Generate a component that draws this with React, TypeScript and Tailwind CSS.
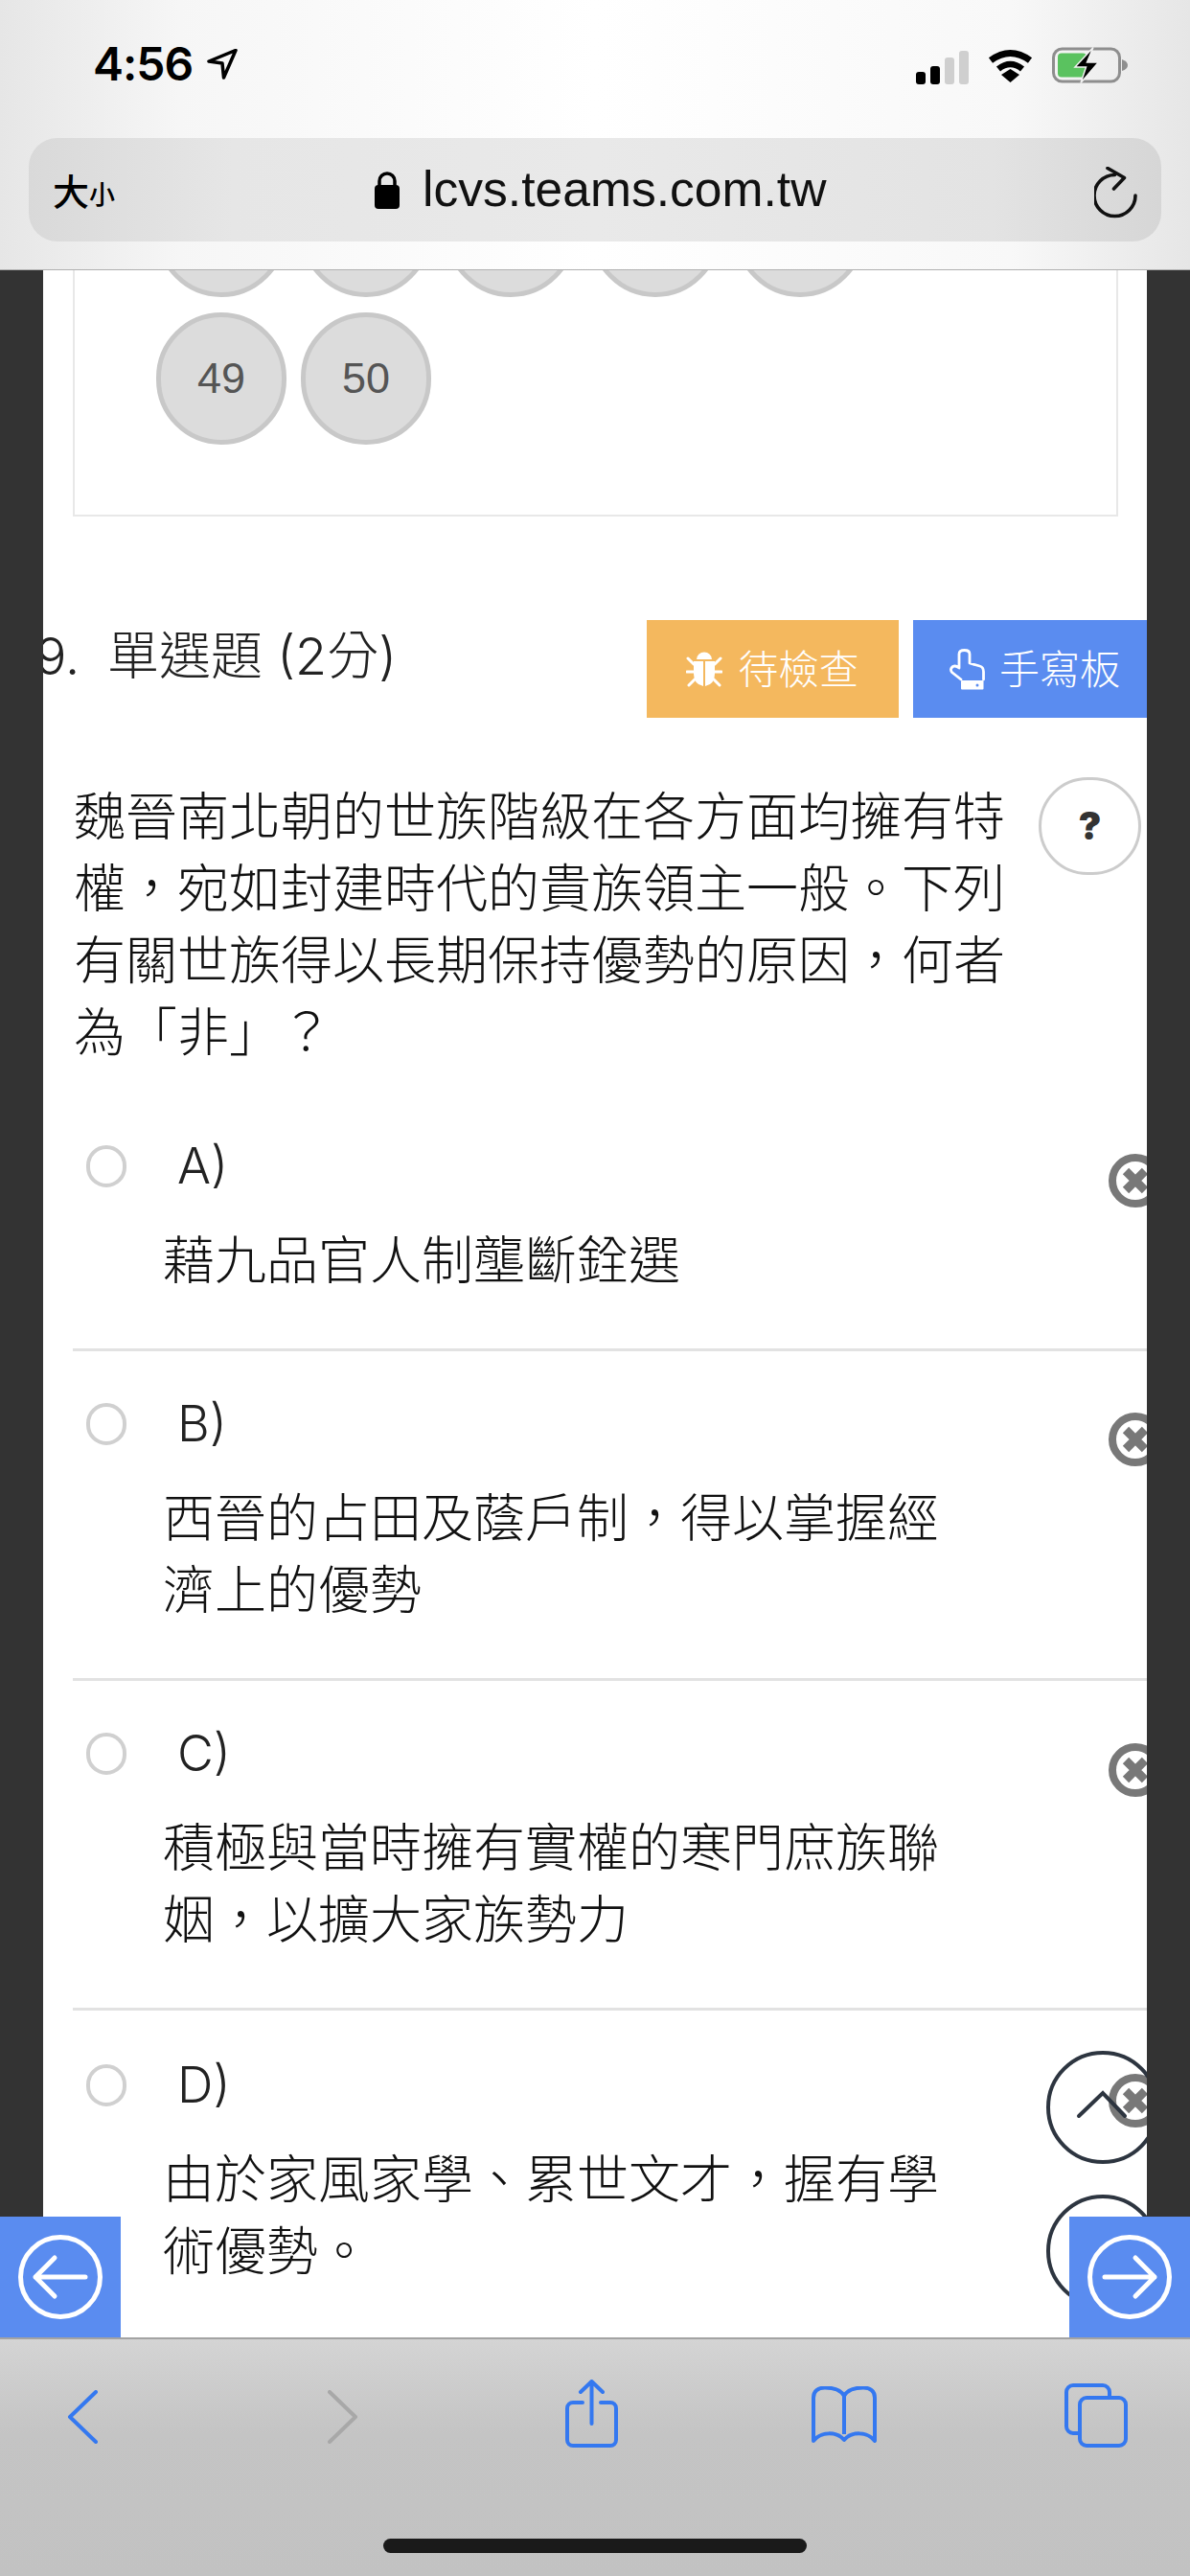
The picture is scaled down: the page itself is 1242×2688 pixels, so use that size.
const options = [
  { label: 'A)', text: '藉九品官人制壟斷銓選', closeTop: 'top-[22px]', padTop: '' },
  { label: 'B)', text: '西晉的占田及蔭戶制\uFF0C得以掌握經濟上的優勢', closeTop: 'top-[64px]', padTop: 'pt-[41px]' },
  { label: 'C)', text: '積極與當時擁有實權的寒門庶族聯姻\uFF0C以擴大家族勢力', closeTop: 'top-[65px]', padTop: 'pt-[41px]' },
  { label: 'D)', text: '由於家風家學、累世文才\uFF0C握有學術優勢。', closeTop: 'top-[66px]', padTop: 'pt-[43px]' },
];

const StatusBar = () => (
  <div className="flex h-[144px] items-start justify-between pl-[97px] pr-[64px] pt-[41px]">
    <div className="flex items-center gap-[15px]">
      <span className="font-['Inter',sans-serif] text-[48px] font-semibold leading-[52px] tracking-[-1px] text-black">4:56</span>
      <svg width="32" height="32" viewBox="0 0 32 32" fill="none" stroke="#000" strokeWidth="3.5" strokeLinejoin="round">
        <path d="M30 1.5 L2 13 L16 15 L17.5 30 Z" />
      </svg>
    </div>
    <div className="flex items-center pt-[8px]">
      <div className="flex h-[37px] items-end gap-[5px]">
        <div className="h-[13px] w-[10px] rounded-[3px] bg-black" />
        <div className="h-[19px] w-[10px] rounded-[3px] bg-black" />
        <div className="h-[28px] w-[10px] rounded-[3px] bg-[#cfcfcf]" />
        <div className="h-[35px] w-[10px] rounded-[3px] bg-[#cfcfcf]" />
      </div>
      <svg className="ml-[20px]" width="47" height="36" viewBox="0 0 47 36" fill="none" stroke="#000" strokeLinecap="butt">
        <path d="M3 12 Q23.5 -3 44 12" strokeWidth="7" />
        <path d="M11 21 Q23.5 11 36 21" strokeWidth="6.5" />
        <path d="M14 27 L23.5 21 L33 27 L23.5 35 Z" fill="#000" stroke="none" />
      </svg>
      <svg className="ml-[20px]" width="80" height="40" viewBox="0 0 80 40" fill="none">
        <rect x="1.5" y="2" width="69" height="34" rx="9" stroke="#8e8e8e" strokeWidth="3" />
        <rect x="6" y="6.5" width="30" height="25" rx="4" fill="#5ac25f" />
        <path d="M73 13 Q79 15 79 19 Q79 23 73 25 Z" fill="#8e8e8e" />
        <path d="M43 0.5 L24 21 H35.5 L30 37.5 L48.5 16 H36.5 Z" fill="#000" stroke="#f2f2f2" strokeWidth="1.5" />
      </svg>
    </div>
  </div>
);

const AddressBar = () => (
  <div className="mx-[30px] flex h-[108px] items-center rounded-[30px] bg-[linear-gradient(90deg,#d9d9d9_0%,#e6e6e6_18%,#e9e9e9_50%,#e3e3e3_85%,#d6d6d6_100%)] pl-[25px] pr-[24px]">
    <div className="flex w-[335px] items-end font-['Noto_Sans_CJK_TC',sans-serif] font-medium leading-none text-black">
      <span className="text-[38px]">大</span>
      <span className="pb-[2px] text-[27px]">小</span>
    </div>
    <svg width="28" height="40" viewBox="0 0 28 40" fill="#000">
      <path d="M6 17 V11 a8 8 0 0 1 16 0 V17" fill="none" stroke="#000" strokeWidth="3.5" />
      <rect x="1" y="15" width="26" height="25" rx="4" />
    </svg>
    <span className="ml-[23px] font-['Liberation_Sans',sans-serif] text-[51.6px] leading-none text-[#111]">lcvs.teams.com.tw</span>
    <svg className="ml-auto mt-[6px]" width="46" height="54" viewBox="0 0 46 54" fill="none" stroke="#111" strokeWidth="3.6" strokeLinecap="round" strokeLinejoin="round">
      <path d="M43 30 A21.5 21.5 0 1 1 21.5 8.5" />
      <path d="M14 1.5 L31.5 11.5 L20.5 23" />
    </svg>
  </div>
);

const BugIcon = () => (
  <svg width="38" height="38" viewBox="0 0 38 38" fill="#fff" stroke="#fff" strokeLinecap="round">
    <path d="M11 9 a8 7.5 0 0 1 16 0 Z" stroke="none" />
    <path d="M8 11 H18 V37 Q8 35 8 24 Z" stroke="none" />
    <path d="M30 11 H20 V37 Q30 35 30 24 Z" stroke="none" />
    <path d="M8 14 L2 8 M8 22 H1 M9 30 L3 36 M30 14 L36 8 M30 22 H37 M29 30 L35 36" strokeWidth="3" />
  </svg>
);

const HandIcon = () => (
  <svg width="37" height="43" viewBox="0 0 37 43" fill="none" stroke="#fff" strokeWidth="2.8" strokeLinecap="round" strokeLinejoin="round">
    <path d="M12 32 L2.5 24.5 Q0 21 3.5 18.5 Q6.5 17 10 20 V5.5 Q10 1.5 15.5 1.5 Q21 1.5 21 5.5 V15 L31.5 18 Q35.5 19 35.5 24 V32" />
    <rect x="12" y="33" width="23.5" height="9.5" rx="1" fill="#fff" stroke="none" />
    <circle cx="29" cy="38" r="1.5" fill="#5a8cf0" stroke="none" />
  </svg>
);

const CloseCircle = () => (
  <svg width="56" height="56" viewBox="0 0 56 56" fill="none">
    <circle cx="28" cy="28" r="24" stroke="#787878" strokeWidth="8" />
    <path d="M18 18 L38 38 M38 18 L18 38" stroke="#787878" strokeWidth="9" />
  </svg>
);

const ArrowCircle = ({ dir }: { dir: 'left' | 'right' }) => (
  <svg width="88" height="88" viewBox="0 0 88 88" fill="none" stroke="#fff" strokeWidth="5" strokeLinecap="round" strokeLinejoin="round">
    <circle cx="44" cy="44" r="41.5" />
    {dir === 'left' ? <path d="M70 44 H18 M38 24 L18 44 L38 64" /> : <path d="M18 44 H70 M50 24 L70 44 L50 64" />}
  </svg>
);

const Toolbar = () => (
  <div className="relative h-[249px] border-t-2 border-[#a3a3a3] bg-[linear-gradient(180deg,#d4d4d4_0%,#c4c4c4_40%,#c2c2c2_100%)]">
    <div className="flex items-start pl-[70px] pt-[42px]">
      <svg className="mt-[11px]" width="32" height="56" viewBox="0 0 32 56" fill="none" stroke="#3478f0" strokeWidth="4" strokeLinecap="round" strokeLinejoin="round">
        <path d="M30 2 L3 28 L30 54" />
      </svg>
      <svg className="ml-[240px] mt-[11px]" width="32" height="56" viewBox="0 0 32 56" fill="none" stroke="#a8a8a8" strokeWidth="4" strokeLinecap="round" strokeLinejoin="round">
        <path d="M2 2 L29 28 L2 54" />
      </svg>
      <svg className="ml-[216px]" width="56" height="72" viewBox="0 0 56 72" fill="none" stroke="#3478f0" strokeWidth="4" strokeLinecap="round" strokeLinejoin="round">
        <path d="M18 24 H8 a6 6 0 0 0 -6 6 V63 a6 6 0 0 0 6 6 H47 a6 6 0 0 0 6 -6 V30 a6 6 0 0 0 -6 -6 H37" />
        <path d="M27.5 46 V2 M16 13 L27.5 2 L39 13" />
      </svg>
      <svg className="ml-[201px] mt-[7px]" width="70" height="60" viewBox="0 0 70 60" fill="none" stroke="#3478f0" strokeWidth="4" strokeLinejoin="round">
        <path d="M34 10 C30 3 22 1.5 14 1.5 C7 1.5 2 5 2 12 V57 C10 47 26 47 34 56 C42 47 58 47 66 57 V12 C66 5 61 1.5 54 1.5 C46 1.5 38 3 34 10 V50" />
      </svg>
      <svg className="ml-[194px] mt-[4px]" width="66" height="67" viewBox="0 0 66 67" fill="none" stroke="#3478f0" strokeWidth="4" strokeLinecap="round" strokeLinejoin="round">
        <path d="M15 52 H9 a7 7 0 0 1 -7 -7 V9 a7 7 0 0 1 7 -7 H40 a7 7 0 0 1 7 7 V15" />
        <rect x="16" y="15" width="48" height="50" rx="7" />
      </svg>
    </div>
    <div className="absolute bottom-[24px] left-[400px] h-[15px] w-[442px] rounded-full bg-[#1a1a1a]" />
  </div>
);

export default function App() {
  return (
    <div className="relative flex h-[2688px] w-[1242px] flex-col overflow-hidden bg-white font-['Inter','Noto_Sans_CJK_TC',sans-serif]">
      <header className="relative z-10 h-[282px] shrink-0 border-b border-[#b0b0b0] bg-[linear-gradient(90deg,#e6e6e6_0%,#f6f6f6_15%,#ffffff_50%,#f8f8f8_85%,#e6e6e6_100%)]">
        <StatusBar />
        <AddressBar />
      </header>

      <main className="flex min-h-0 flex-1">
        <div className="w-[45px] shrink-0 bg-[#333333]" />
        <div className="relative min-w-0 flex-1 overflow-hidden bg-white">
          <div className="ml-[31px] mt-[-112px] w-[1091px] border-2 border-[#e8e8e8] pb-[73px] pl-[85px]">
            <div className="grid grid-cols-[repeat(5,136px)] gap-x-[15px] gap-y-[16px]">
              {[44, 45, 46, 47, 48, 49, 50].map((n) => (
                <div
                  key={n}
                  className="flex h-[138px] w-[136px] items-center justify-center rounded-full border-[5px] border-[#c8c8c8] bg-[#dcdcdc] font-['Liberation_Sans',sans-serif] text-[45px] text-[#555]"
                >
                  {n >= 49 ? n : null}
                </div>
              ))}
            </div>
          </div>

          <div className="mt-[108px] flex items-start">
            <div className="ml-[-8px] flex items-center pt-[8px] text-[54px] font-light leading-[60px] text-[#222]">
              <span className="w-[75px]">9.</span>
              <span className="whitespace-pre">單選題 (2分)</span>
            </div>
            <div className="ml-auto flex gap-[15px]">
              <button className="flex h-[102px] w-[263px] items-center justify-center gap-[16px] bg-[#f4b85e] text-[42px] font-light text-white">
                <BugIcon />
                待檢查
              </button>
              <button className="flex h-[102px] w-[244px] items-center justify-center gap-[15px] bg-[#5a8cf0] pl-[10px] text-[42px] font-light text-white">
                <HandIcon />
                手寫板
              </button>
            </div>
          </div>

          <div className="mt-[66px] flex items-start pl-[32px]">
            <p className="w-[975px] text-[54px] font-light leading-[75px] text-[#111]">
              {'魏晉南北朝的世族階級在各方面均擁有特權\uFF0C宛如封建時代的貴族領主一般。下列有關世族得以長期保持優勢的原因\uFF0C何者為「非」\uFF1F'}
            </p>
            <div className="ml-[32px] mt-[-4px] flex h-[102px] w-[107px] items-center justify-center rounded-full border-[3px] border-[#cccccc] text-[40px] font-black text-[#333]">
              ?
            </div>
          </div>

          <div className="mt-[67px] pl-[31px]">
            {options.map((o, i) => (
              <div key={o.label} className={`relative ${i < 3 ? 'border-b-[3px] border-[#e2e2e2] pb-[54px]' : ''} ${o.padTop}`}>
                <div className="flex h-[70px] items-center pl-[14px]">
                  <div className="h-[44px] w-[42px] rounded-full border-[4px] border-[#d0d0d0] bg-white" />
                  <span className="ml-[53px] text-[52px] font-light leading-none text-[#222]">{o.label}</span>
                </div>
                <p className="ml-[94px] mt-[26px] w-[815px] text-[54px] font-light leading-[75px] text-[#111]">{o.text}</p>
                <div className={`absolute left-[1081px] ${o.closeTop}`}>
                  <CloseCircle />
                </div>
              </div>
            ))}
          </div>

          <svg className="absolute bottom-[181px] right-[-13px]" width="118" height="118" viewBox="0 0 118 118" fill="none" stroke="#2d3540" strokeWidth="4" strokeLinecap="round">
            <circle cx="59" cy="59" r="57" />
            <path d="M34 68 L59 44 L82 68" />
          </svg>
          <svg className="absolute bottom-[31px] right-[-13px]" width="118" height="118" viewBox="0 0 118 118" fill="none" stroke="#2d3540" strokeWidth="4">
            <circle cx="59" cy="59" r="57" />
          </svg>
        </div>
        <div className="w-[45px] shrink-0 bg-[#333333]" />
      </main>

      <Toolbar />

      <button className="absolute bottom-[249px] left-0 z-20 flex h-[126px] w-[126px] items-center justify-center bg-[#5a8cf0]">
        <ArrowCircle dir="left" />
      </button>
      <button className="absolute bottom-[249px] right-0 z-20 flex h-[126px] w-[126px] items-center justify-center bg-[#5a8cf0]">
        <ArrowCircle dir="right" />
      </button>
    </div>
  );
}
